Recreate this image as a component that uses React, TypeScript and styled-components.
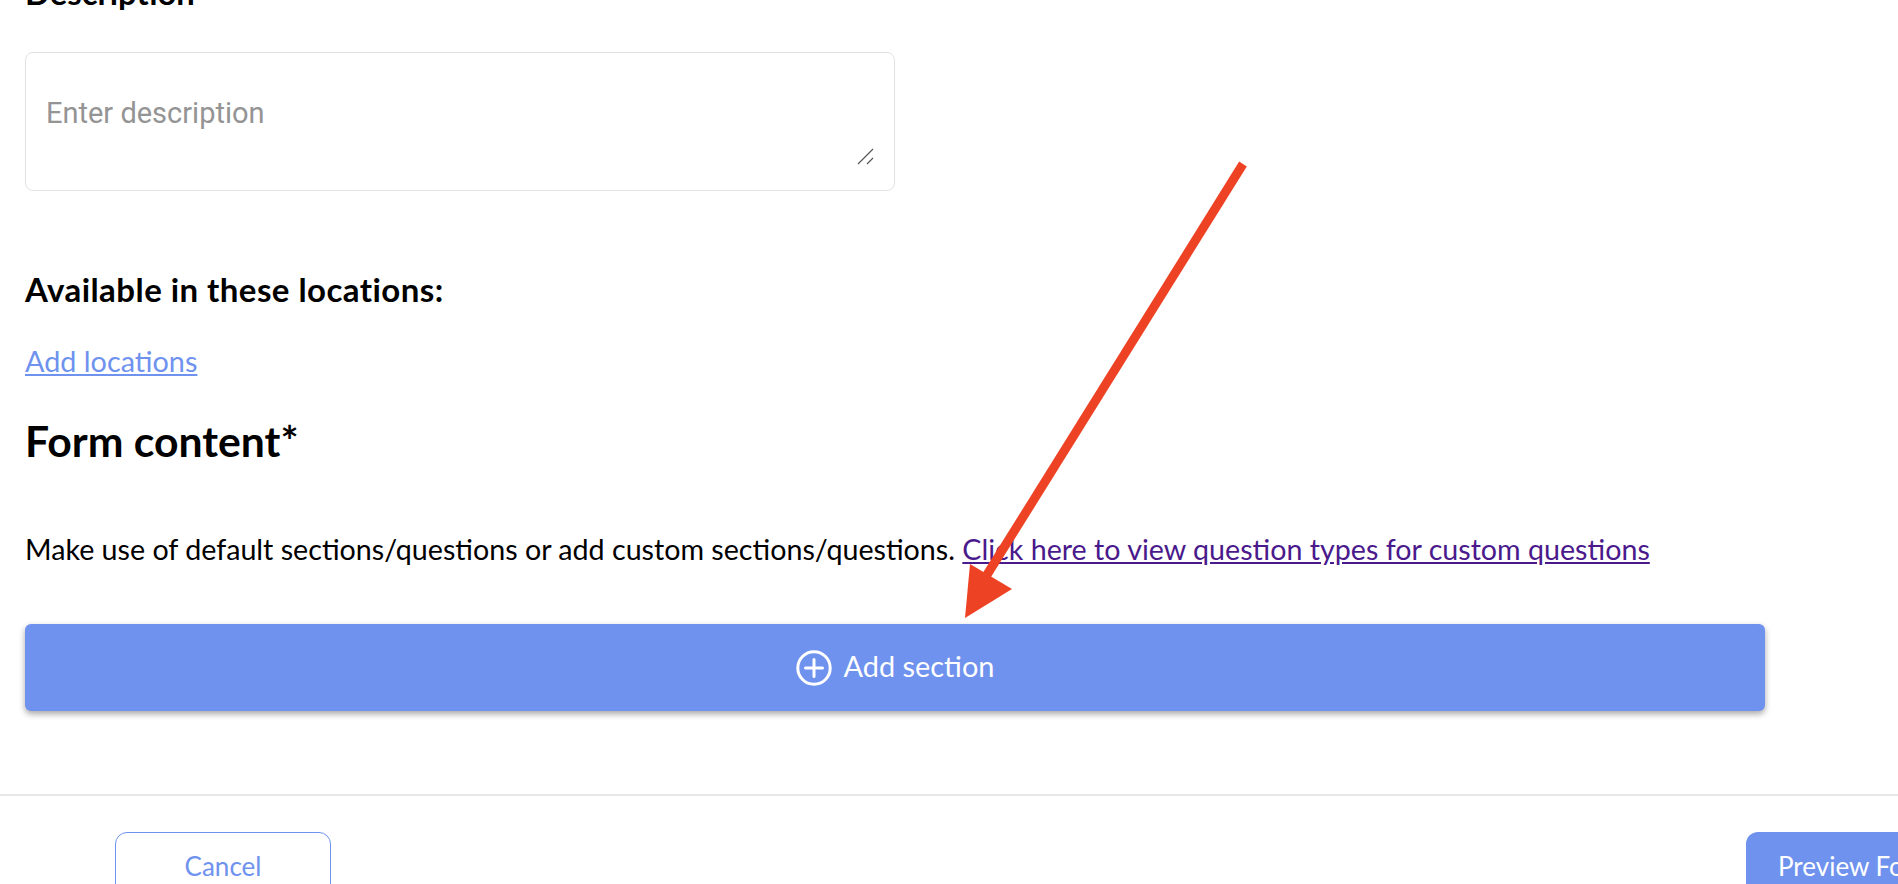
import React from "react";
import styled, { createGlobalStyle } from "styled-components";

const Global = createGlobalStyle`
  html, body { margin: 0; padding: 0; height: 884px; overflow: hidden; background: #fff; }
  * { box-sizing: border-box; }
`;

const Page = styled.div`
  position: relative;
  width: 1898px;
  height: 884px;
  overflow: hidden;
  font-family: Lato, "Liberation Sans", sans-serif;
  color: #000;
`;

const Content = styled.main`
  padding: 0 0 0 25px;
  display: flex;
  flex-direction: column;
  height: 794px;
`;

const FieldLabel = styled.div`
  margin-top: -23px;
  height: 32px;
  font-size: 32.8px;
  line-height: 32px;
  font-weight: 700;
`;

const TextareaWrap = styled.div`
  position: relative;
  width: 870px;
  height: 139px;
  margin-top: 43px;
`;

const Textarea = styled.textarea`
  display: block;
  width: 100%;
  height: 100%;
  resize: none;
  border: 1px solid #e2e2e2;
  border-radius: 8px;
  padding: 43px 20px 0;
  font-family: Roboto, sans-serif;
  font-size: 29px;
  line-height: 34px;
  outline: none;
  background: #fff;
  &::placeholder { color: #949494; opacity: 1; }
`;

const Grip = styled.svg`
  position: absolute;
  right: 20px;
  bottom: 26px;
  width: 18px;
  height: 17px;
`;

const SubHeading = styled.h3`
  margin: 80px 0 0;
  font-size: 33px;
  line-height: 36px;
  letter-spacing: 0.45px;
  font-weight: 700;
`;

const LocationLink = styled.a`
  align-self: flex-start;
  margin-top: 36px;
  font-size: 28.8px;
  line-height: 36px;
  color: #6f92ee;
  text-decoration: underline;
`;

const Heading = styled.h2`
  margin: 38px 0 0;
  font-size: 42.7px;
  line-height: 48px;
  font-weight: 700;
`;

const Hint = styled.p`
  margin: 66px 0 0;
  font-size: 28.65px;
  line-height: 36px;
  white-space: nowrap;
`;

const HintLink = styled.a`
  color: #4a1a8c;
  text-decoration: underline;
`;

const AddButton = styled.button`
  width: 1740px;
  height: 87px;
  margin-top: 57px;
  display: flex;
  align-items: center;
  justify-content: center;
  gap: 12px;
  background: #6f92ee;
  border: none;
  border-radius: 6px;
  box-shadow: 0 3px 6px rgba(0, 0, 0, 0.35);
  color: #fff;
  font-family: inherit;
  font-size: 28.9px;
`;

const AddLabel = styled.span`
  margin-bottom: 4px;
`;

const Footer = styled.footer`
  height: 90px;
  border-top: 2px solid #e8e8e8;
  padding: 36px 0 0 115px;
  display: flex;
  justify-content: space-between;
  align-items: flex-start;
`;

const CancelButton = styled.button`
  width: 216px;
  height: 68px;
  background: #fff;
  border: 1px solid #6f92ee;
  border-radius: 12px;
  color: #6f92ee;
  font-family: inherit;
  font-size: 26px;
`;

const PreviewButton = styled.button`
  width: 152px;
  height: 68px;
  padding: 0 0 0 32px;
  text-align: left;
  white-space: nowrap;
  overflow: hidden;
  background: #6f92ee;
  border: none;
  border-radius: 12px 0 0 12px;
  color: #fff;
  font-family: inherit;
  font-size: 26px;
`;

const Arrow = styled.svg`
  position: absolute;
  left: 0;
  top: 0;
  width: 1898px;
  height: 884px;
  pointer-events: none;
`;

export default function App() {
  return (
    <Page>
      <Global />
      <Content>
        <FieldLabel>Description</FieldLabel>
        <TextareaWrap>
          <Textarea placeholder="Enter description" />
          <Grip viewBox="0 0 18 17" aria-hidden="true">
            <path d="M1 16 L16 1 M10 16 L16 10" stroke="#555" strokeWidth="1.2" fill="none" />
          </Grip>
        </TextareaWrap>
        <SubHeading>Available in these locations:</SubHeading>
        <LocationLink href="#">Add locations</LocationLink>
        <Heading>Form content*</Heading>
        <Hint>
          Make use of default sections/questions or add custom sections/questions.{" "}
          <HintLink href="#">Click here to view question types for custom questions</HintLink>
        </Hint>
        <AddButton>
          <svg width="36" height="36" viewBox="0 0 36 36" fill="none" stroke="#fff" strokeWidth="3" aria-hidden="true">
            <circle cx="18" cy="18" r="16.2" />
            <path d="M18 9.5V26.5M9.5 18H26.5" strokeLinecap="round" />
          </svg>
          <AddLabel>Add section</AddLabel>
        </AddButton>
      </Content>
      <Footer>
        <CancelButton>Cancel</CancelButton>
        <PreviewButton>Preview Form</PreviewButton>
      </Footer>
      <Arrow viewBox="0 0 1898 884" aria-hidden="true">
        <path d="M1243 164 L985 578" stroke="#ee4224" strokeWidth="9" fill="none" />
        <path d="M965 618 L970 564 L1012 589 Z" fill="#ee4224" />
      </Arrow>
    </Page>
  );
}
